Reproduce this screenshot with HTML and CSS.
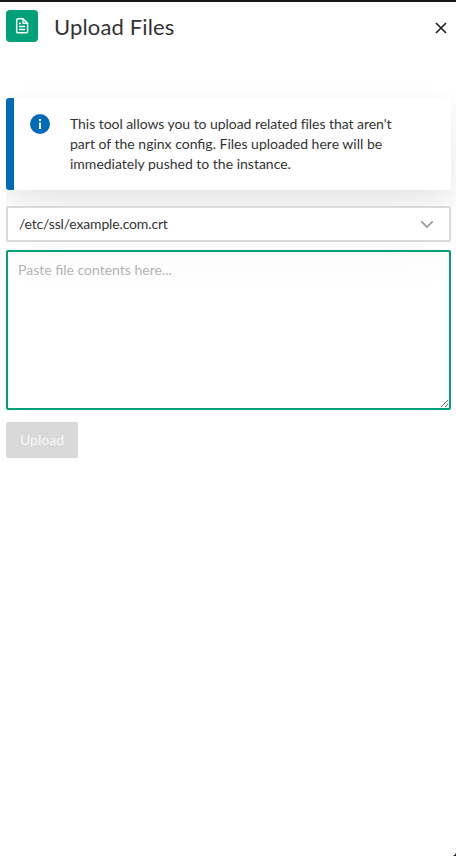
FILE: index.html
```html
<!DOCTYPE html>
<html lang="en">
<head>
<meta charset="utf-8">
<title>Upload Files</title>
<link rel="stylesheet" href="styles.css">
</head>
<body>
<div class="panel">
  <header class="header">
    <div class="tile">
      <svg width="14" height="18" viewBox="0 0 14 18" fill="none" stroke="#fff" stroke-width="1.5" stroke-linejoin="round">
        <path d="M3 1.750h5l4.600 4.600V14.500a1.300 1.300 0 0 1-1.300 1.300H3A1.300 1.300 0 0 1 1.700 14.500V3A1.300 1.300 0 0 1 3 1.750Z"/>
        <path d="M8 1.750v4.500h4.500M4 6.500h2M4 9.500h6M4 12.500h6" stroke-width="1.300"/>
      </svg>
    </div>
    <h1 class="title">Upload Files</h1>
    <button class="close" aria-label="Close">
      <svg width="12" height="12" viewBox="0 0 12 12" fill="none" stroke="#222" stroke-width="1.700"><path d="M1 1l10 10M11 1L1 11"/></svg>
    </button>
  </header>
  <main class="content">
    <section class="notice">
      <svg class="info" width="20" height="20" viewBox="0 0 20 20"><circle cx="10" cy="10" r="10" fill="#006bb6"/><path d="M9 5h2v2H9zM9 8.500h2V15H9z" fill="#fff"/></svg>
      <p class="message"><span class="tight">This tool allows you to upload related files that aren't</span><br>part of the nginx config. Files uploaded here will be<br>immediately pushed to the instance.</p>
    </section>
    <div class="select">
      <span class="path">/etc/ssl/example.com.crt</span>
      <svg width="14" height="9" viewBox="0 0 14 9" fill="none" stroke="#999" stroke-width="1.700"><path d="M1.300 1.300L7 7l5.700-5.700"/></svg>
    </div>
    <textarea class="contents" placeholder="Paste file contents here..."></textarea>
    <button class="upload" disabled>Upload</button>
  </main>
</div>
</body>
</html>
```
FILE: styles.css
```css
* { box-sizing: border-box; }
body {
  margin: 0;
  background: #fff;
  color: #333;
  font-family: Lato, "Liberation Sans", sans-serif;
  font-size: 14px;
}
.panel {
  position: relative;
  height: 856px;
  border-top: 2px solid #18181a;
  overflow: hidden;
}
/* Rounded corner of the window frame */
.panel::after {
  content: "";
  position: absolute;
  right: 0;
  bottom: 0;
  width: 3px;
  height: 3px;
  background: radial-gradient(circle at 0 0, transparent 2px, #222 3px);
}
.header {
  display: flex;
  align-items: center;
  height: 48px;
  padding: 0 9px 0 6px;
}
.tile {
  display: flex;
  align-items: center;
  justify-content: center;
  width: 32px;
  height: 32px;
  border-radius: 4px;
  background: #00a078;
}
.title {
  margin: 2px auto 0 16px;
  line-height: 30px;
  font-size: 22px;
  font-weight: 400;
  letter-spacing: 0.15px;
}
.close {
  display: flex;
  margin-top: 4px;
  padding: 0;
  border: 0;
  background: none;
}
.content {
  display: flex;
  flex-direction: column;
  align-items: flex-start;
  height: 806px;
  margin-left: 6px;
  padding: 48px 5px 0 0;
  overflow: hidden;
}
.notice {
  display: flex;
  flex: none;
  width: 100%;
  height: 92px;
  padding: 16px;
  border-left: 8px solid #006bb6;
  border-radius: 3px;
  background: #fff;
  box-shadow: 0 8px 20px rgba(0, 0, 0, 0.06), 0 40px 80px rgba(0, 0, 0, 0.06);
}
.message {
  margin: 0 0 0 20px;
  line-height: 20px;
  white-space: nowrap;
}
.tight { letter-spacing: -0.05px; }
.select {
  position: relative;
  display: flex;
  flex: none;
  align-items: center;
  justify-content: space-between;
  width: 100%;
  height: 36px;
  margin-top: 16px;
  padding: 0 15px 0 11px;
  border: 2px solid #d9d9d9;
  border-radius: 2px;
  background: #fff;
}
.path {
  margin-top: -2px;
  letter-spacing: -0.15px;
}
.contents {
  display: block;
  flex: none;
  width: 100%;
  height: 160px;
  margin: 8px 0 12px;
  padding: 8px 10px;
  border: 2px solid #00a078;
  border-radius: 2px;
  outline: 0;
  background: transparent;
  color: #333;
  font: 14px/20px Lato, "Liberation Sans", sans-serif;
  resize: both;
}
.contents::placeholder { color: #b3b3b3; }
.upload {
  width: 72px;
  height: 36px;
  padding: 0;
  border: 0;
  border-radius: 2px;
  background: #d9d9d9;
  color: #f8f8f8;
  font: 14px/20px Lato, "Liberation Sans", sans-serif;
}
```
